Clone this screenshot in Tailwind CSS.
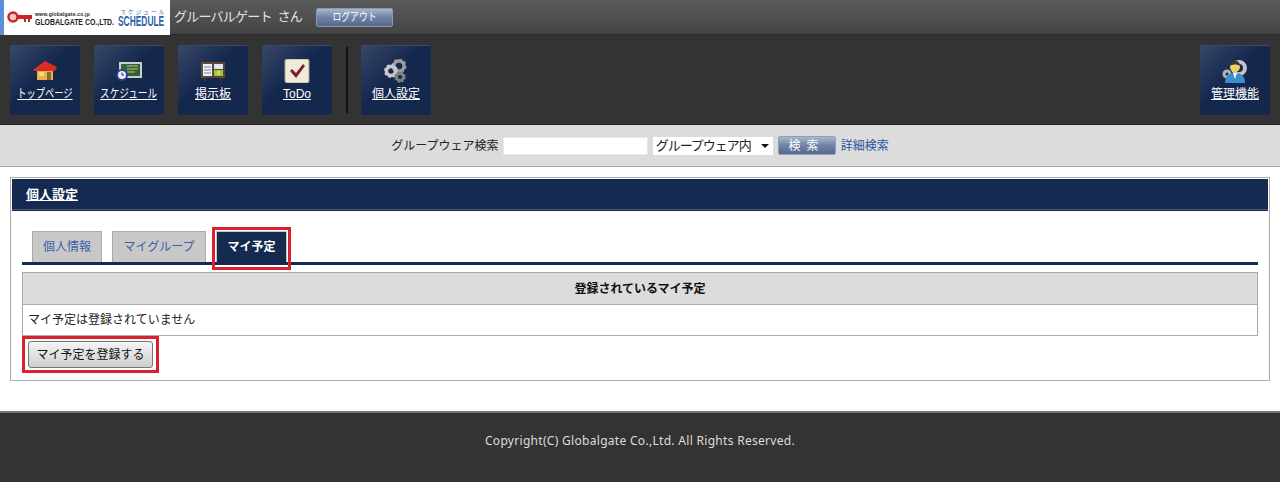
<!DOCTYPE html>
<html lang="ja">
<head>
  <meta charset="UTF-8" />
  <title>個人設定</title>
  <script src="https://cdn.jsdelivr.net/npm/@tailwindcss/browser@4"></script>
</head>
<body class="bg-white text-[12px] text-[#222] font-['Liberation_Sans','Noto_Sans_CJK_JP',sans-serif] overflow-hidden">

  <!-- header -->
  <div class="h-[35px] flex items-center bg-gradient-to-b from-[#5a5a5a] to-[#454545] border-b border-[#2a2a2a]">
    <div class="w-[170px] h-[35px] bg-white border-l-[4px] border-[#5b8fd6] flex items-center pl-[3px] shrink-0 overflow-hidden">
      <svg class="w-[25px] h-[14px] shrink-0" viewBox="0 0 25 14">
        <circle cx="6" cy="7" r="4.5" fill="#f3c9c0" stroke="#c8242b" stroke-width="2.5" />
        <path d="M10 5h15v4h-2v3h-2V9h-2v3h-2V9h-7z" fill="#c8242b" />
      </svg>
      <div class="ml-[3px] w-[82px] shrink-0 font-bold whitespace-nowrap pt-[4px]">
        <div class="text-[5px] text-[#222] leading-[6px] tracking-[0.2px]">www.globalgate.co.jp</div>
        <div class="text-[9px] text-[#222] leading-[10px] scale-x-[0.77] origin-left">GLOBALGATE&nbsp;CO.,LTD.</div>
      </div>
      <div class="ml-[1px] w-[47px] shrink-0 whitespace-nowrap">
        <div class="text-[6px] text-[#3a6fb5] leading-[8px] tracking-[1.8px] pl-[2px]">スケジュール</div>
        <div class="text-[14px] font-bold text-[#2f62ad] leading-[11px] scale-x-[0.6] origin-left">SCHEDULE</div>
      </div>
    </div>
    <span class="ml-[4px] text-[13px] text-[#e4e4e4] tracking-[-0.75px]">グルーバルゲート&nbsp;&nbsp;さん</span>
    <a class="ml-[14px] w-[77px] h-[19px] rounded-[2px] bg-gradient-to-b from-[#a9b7cd] via-[#6f83a6] to-[#56698d] border border-[#8b98ad] text-white text-[11px] flex items-center justify-center"><span class="scale-x-[0.8] whitespace-nowrap">ログアウト</span></a>
  </div>

  <!-- nav -->
  <div class="h-[90px] bg-[#333] border-b border-[#222] flex items-center px-[10px] pt-[1px]">
    <a class="relative w-[70px] h-[70px] overflow-hidden rounded-[2px] bg-[#14274d] border-t border-[#3a4a6c] flex flex-col items-center text-white mr-[14px]">
      <div class="absolute inset-0 bg-gradient-to-br from-white/15 via-transparent via-45% to-transparent"></div>
      <svg class="w-[26px] h-[24px] mt-[13px]" viewBox="0 0 26 24">
        <path d="M5 10h16v11H5z" fill="#e8b04a" /><path d="M15 13h4v8h-4z" fill="#8a6a2a" /><path d="M7 13h5v4H7z" fill="#f6d98a" />
        <path d="M1 11 13 2l12 6-2 4H3z" fill="#d92a20" />
      </svg>
      <span class="underline text-[12px] mt-[2px] whitespace-nowrap scale-x-[0.77]">トップページ</span>
    </a>
    <a class="relative w-[70px] h-[70px] overflow-hidden rounded-[2px] bg-[#14274d] border-t border-[#3a4a6c] flex flex-col items-center text-white mr-[14px]">
      <div class="absolute inset-0 bg-gradient-to-br from-white/15 via-transparent via-45% to-transparent"></div>
      <svg class="w-[26px] h-[24px] mt-[13px]" viewBox="0 0 26 24">
        <path d="M3 3h23v16H3z" fill="#c8d0c8" /><path d="M5 5h19v12H5z" fill="#2f5f3f" />
        <path d="M11 7h11M11 10h11M11 13h8" stroke="#c9c860" stroke-width="1" />
        <circle cx="6" cy="16" r="6" fill="#1f3f9a" /><circle cx="6" cy="16" r="4" fill="#eee" /><path d="M6 13.5V16h2" stroke="#222" fill="none" />
      </svg>
      <span class="underline text-[12px] mt-[2px] whitespace-nowrap scale-x-[0.8]">スケジュール</span>
    </a>
    <a class="relative w-[70px] h-[70px] overflow-hidden rounded-[2px] bg-[#14274d] border-t border-[#3a4a6c] flex flex-col items-center text-white mr-[14px]">
      <div class="absolute inset-0 bg-gradient-to-br from-white/15 via-transparent via-45% to-transparent"></div>
      <svg class="w-[26px] h-[24px] mt-[13px]" viewBox="0 0 26 24">
        <path d="M1 3h24v16H1z" fill="#5a4632" /><path d="M3 5h9v12H3z" fill="#eef0f4" /><path d="M14 5h9v5h-9z" fill="#dfe6ee" /><path d="M14 11h9v6h-9z" fill="#8fc94a" />
        <path d="M4 8h7M4 11h7M4 14h7" stroke="#6a86b8" /><path d="M17 12h3v4h-3z" fill="#e8d040" />
        <path d="M4 19h2v3H4zM20 19h2v3h-2z" fill="#3e2f20" />
      </svg>
      <span class="underline text-[12px] mt-[2px] whitespace-nowrap">掲示板</span>
    </a>
    <a class="relative w-[70px] h-[70px] overflow-hidden rounded-[2px] bg-[#14274d] border-t border-[#3a4a6c] flex flex-col items-center text-white">
      <div class="absolute inset-0 bg-gradient-to-br from-white/15 via-transparent via-45% to-transparent"></div>
      <svg class="w-[26px] h-[24px] mt-[13px]" viewBox="0 0 26 24">
        <rect x="1" y="0" width="24" height="24" rx="2" fill="#f0ebd8" stroke="#a89f86" />
        <path d="M6 12l2-2 4 4 7-9 2 2-9 12z" fill="#7a1f28" />
      </svg>
      <span class="underline text-[12px] mt-[2px] whitespace-nowrap">ToDo</span>
    </a>
    <div class="w-[2px] h-[66px] bg-[#111] ml-[14px] mr-[13px]"></div>
    <a class="relative w-[70px] h-[70px] overflow-hidden rounded-[2px] bg-[#14274d] border-t border-[#3a4a6c] flex flex-col items-center text-white">
      <div class="absolute inset-0 bg-gradient-to-br from-white/15 via-transparent via-45% to-transparent"></div>
      <svg class="w-[26px] h-[24px] mt-[13px]" viewBox="0 0 26 24">
        <g fill="none">
          <circle cx="16" cy="7" r="5" stroke="#9a9a9a" stroke-width="3.5" /><circle cx="16" cy="7" r="6.5" stroke="#9a9a9a" stroke-width="2" stroke-dasharray="2.5 2.5" />
          <circle cx="8" cy="12" r="4.5" stroke="#c8c8c8" stroke-width="3.5" /><circle cx="8" cy="12" r="6" stroke="#c8c8c8" stroke-width="2" stroke-dasharray="2.5 2.2" />
          <circle cx="17" cy="18" r="3.5" stroke="#808080" stroke-width="3" /><circle cx="17" cy="18" r="5" stroke="#808080" stroke-width="1.5" stroke-dasharray="2 2" />
        </g>
      </svg>
      <span class="underline text-[12px] mt-[2px] whitespace-nowrap">個人設定</span>
    </a>
    <a class="relative ml-auto w-[70px] h-[70px] overflow-hidden rounded-[2px] bg-[#14274d] border-t border-[#3a4a6c] flex flex-col items-center text-white">
      <div class="absolute inset-0 bg-gradient-to-br from-white/15 via-transparent via-45% to-transparent"></div>
      <svg class="w-[26px] h-[24px] mt-[13px]" viewBox="0 0 26 24">
        <circle cx="17" cy="9" r="6" fill="none" stroke="#c4c4c4" stroke-width="4" />
        <circle cx="5" cy="15" r="3" fill="none" stroke="#b0b0b0" stroke-width="3" />
        <path d="M3 24c0-7 4-10 10-10s10 3 10 10z" fill="#3a8fd0" /><path d="M11 14h4l-2 6z" fill="#fff" />
        <circle cx="13" cy="8" r="5" fill="#f0d060" /><path d="M8 7c0-7 10-7 10 0-3-2-7-2-10 0z" fill="#333" />
      </svg>
      <span class="underline text-[12px] mt-[2px] whitespace-nowrap">管理機能</span>
    </a>
  </div>

  <!-- search -->
  <div class="h-[42px] bg-[#dcdcdc] border-b border-[#aaa] flex items-center justify-center">
    <span class="text-[12px] text-[#222]">グループウェア検索</span>
    <input type="text" class="ml-[4px] w-[145px] h-[18px] bg-white border border-[#e8e8e8]" />
    <div class="ml-[5px] w-[120px] h-[18px] bg-white flex items-center justify-between pl-[3px] pr-[4px] text-[13px] text-[#222]">
      <span class="tracking-[-1px]">グループウェア内</span><span class="w-0 h-0 border-x-[4px] border-x-transparent border-t-[4px] border-t-[#111]"></span>
    </div>
    <a class="ml-[5px] w-[58px] h-[19px] rounded-[2px] bg-gradient-to-b from-[#a9b7cd] via-[#6f83a6] to-[#56698d] border border-[#8ea0bd] text-white text-[12px] flex items-center justify-center tracking-[0.5em]">検索</a>
    <a class="ml-[5px] text-[#2b55a0] text-[12px]">詳細検索</a>
  </div>

  <!-- content -->
  <div class="px-[10px] pt-[10px] pb-[30px]">
    <div class="border border-[#aaa] p-[1px] h-[204px]">
      <div class="h-[32px] bg-[#152a50] shadow-[inset_0_-1px_0_#152a50,inset_0_-2px_0_#4a5a78] flex items-center pl-[14px]">
        <span class="text-white text-[13px] font-bold underline">個人設定</span>
      </div>
      <div class="px-[10px] pt-[20px]">
        <div class="relative flex gap-[10px] pl-[10px] h-[34px] border-b-[3px] border-[#152a50]">
          <a class="w-[70px] h-[31px] bg-[#c8c8c8] border border-b-0 border-[#aaa] text-[#3a62a8] flex items-center justify-center">個人情報</a>
          <a class="w-[94px] h-[31px] bg-[#c8c8c8] border border-b-0 border-[#aaa] text-[#3a62a8] flex items-center justify-center">マイグループ</a>
          <a class="w-[71px] h-[31px] bg-[#152a50] border border-b-0 border-[#c8c8c8] text-white font-bold flex items-center justify-center">マイ予定</a>
          <div class="absolute left-[190px] top-[-4px] w-[79px] h-[43px] border-[3px] border-[#d9202c]"></div>
        </div>
        <div class="mt-[7px] border border-[#aaa]">
          <div class="h-[32px] bg-[#dcdcdc] border-b border-[#aaa] flex items-center justify-center font-bold text-[#111]">登録されているマイ予定</div>
          <div class="h-[30px] flex items-center pl-[5px] text-[#222]">マイ予定は登録されていません</div>
        </div>
        <div class="w-[137px] h-[37px] border-[3px] border-[#d9202c] flex items-center pl-[3px]">
          <button class="w-[125px] h-[27px] rounded-[3px] border border-[#777] bg-gradient-to-b from-[#f4f4f4] to-[#cfcfcf] text-[12px] text-[#111]">マイ予定を登録する</button>
        </div>
      </div>
    </div>
  </div>

  <!-- footer -->
  <div class="h-[71px] bg-[#333] border-t-[2px] border-[#777] flex items-center justify-center text-[12px] tracking-[0.3px] text-[#ddd] font-['Noto_Sans','Liberation_Sans',sans-serif] pb-[13px]">
    Copyright(C) Globalgate Co.,Ltd. All Rights Reserved.
  </div>
</body>
</html>
